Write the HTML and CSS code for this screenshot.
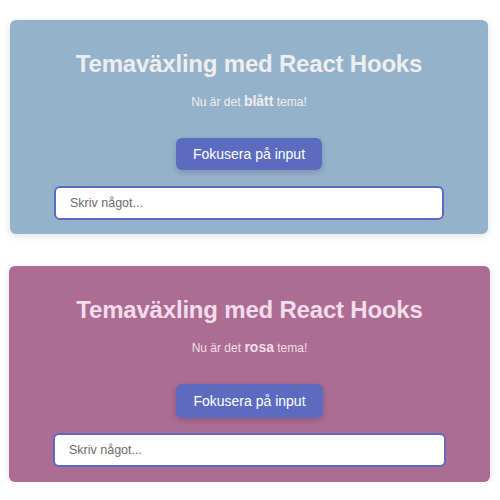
FILE: index.html
```html
<!DOCTYPE html>
<html lang="sv">
<head>
<meta charset="utf-8">
<title>Temaväxling</title>
<link rel="stylesheet" href="styles.css">
</head>
<body>
<main class="page">
  <section class="card card--blue">
    <h1 class="card__title">Temaväxling med React Hooks</h1>
    <p class="card__text">Nu är det <strong>blått</strong> tema!</p>
    <button class="card__button" type="button">Fokusera på input</button>
    <input class="card__input" type="text" placeholder="Skriv något...">
  </section>
  <section class="card card--pink">
    <h1 class="card__title">Temaväxling med React Hooks</h1>
    <p class="card__text">Nu är det <strong>rosa</strong> tema!</p>
    <button class="card__button" type="button">Fokusera på input</button>
    <input class="card__input" type="text" placeholder="Skriv något...">
  </section>
</main>
</body>
</html>
```

FILE: styles.css
```css
* { box-sizing: border-box; }

html, body {
  margin: 0;
  background: #ffffff;
  font-family: "Liberation Sans", Arial, Helvetica, sans-serif;
}

.page {
  display: flex;
  flex-direction: column;
  gap: 32px;
  padding: 20px 12px 0 10px;
}

.card {
  display: flex;
  flex-direction: column;
  align-items: center;
  padding: 30px 44px 14px;
  border-radius: 6px;
  box-shadow: 0 2px 8px rgba(0, 0, 0, 0.12);
}

.card--blue {
  background: #95b2cb;
  color: #eeeeee;
}

.card--pink {
  background: #ac6c94;
  color: #f3dde8;
  margin: 0 -2px 0 -1px;
  padding-bottom: 15px;
}

.card__title {
  margin: 0;
  font-size: 24px;
  font-weight: bold;
  line-height: 28px;
  letter-spacing: -0.2px;
}

.card__text {
  margin: 15px 0 0;
  font-size: 12px;
  line-height: 16px;
}

.card__text strong {
  font-size: 14px;
}

.card__button {
  margin-top: 28px;
  padding: 8px 17px;
  border: none;
  border-radius: 6px;
  background: #5c6bc0;
  color: #ffffff;
  font-family: inherit;
  font-size: 14px;
  line-height: 16px;
  box-shadow: 0 2px 6px rgba(0, 0, 0, 0.18);
  cursor: pointer;
}

.card--pink .card__button {
  padding-top: 9px;
  padding-bottom: 9px;
}

.card--pink .card__input {
  margin-top: 15px;
}

.card__input {
  margin-top: 16px;
  width: 100%;
  height: 34px;
  padding: 0 14px;
  border: 2px solid #5c6bc0;
  border-radius: 6px;
  background: #ffffff;
  font-family: inherit;
  font-size: 12.5px;
  color: #333333;
  outline: none;
}

.card__input::placeholder {
  color: #6b6b6b;
}
```
